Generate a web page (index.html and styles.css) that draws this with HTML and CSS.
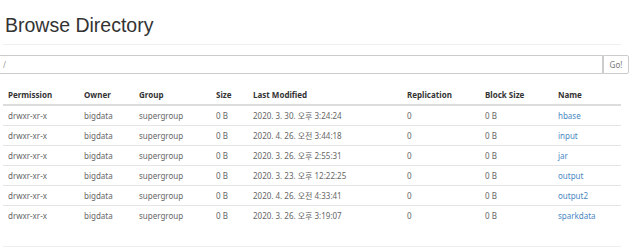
FILE: index.html
```html
<!DOCTYPE html>
<html lang="ko">
<head>
  <meta charset="UTF-8">
  <title>Browsing HDFS</title>
  <link rel="stylesheet" href="styles.css">
</head>
<body>
  <div class="page-header">
    <h1 class="page-title">Browse Directory</h1>
  </div>

  <!-- Path input -->
  <div class="path-bar">
    <input type="text" class="path-input" placeholder="/">
    <button type="button" class="go-button">Go!</button>
  </div>

  <table class="dir-table">
    <thead>
      <tr>
        <th class="col-perm">Permission</th>
        <th class="col-owner">Owner</th>
        <th class="col-group">Group</th>
        <th class="col-size">Size</th>
        <th class="col-date">Last Modified</th>
        <th class="col-repl">Replication</th>
        <th class="col-block">Block Size</th>
        <th class="col-name">Name</th>
      </tr>
    </thead>
    <tbody>
      <tr>
        <td>drwxr-xr-x</td><td>bigdata</td><td>supergroup</td><td>0 B</td>
        <td>2020. 3. 30. 오후 3:24:24</td><td>0</td><td>0 B</td><td><a href="#">hbase</a></td>
      </tr>
      <tr>
        <td>drwxr-xr-x</td><td>bigdata</td><td>supergroup</td><td>0 B</td>
        <td>2020. 4. 26. 오전 3:44:18</td><td>0</td><td>0 B</td><td><a href="#">input</a></td>
      </tr>
      <tr>
        <td>drwxr-xr-x</td><td>bigdata</td><td>supergroup</td><td>0 B</td>
        <td>2020. 3. 26. 오후 2:55:31</td><td>0</td><td>0 B</td><td><a href="#">jar</a></td>
      </tr>
      <tr>
        <td>drwxr-xr-x</td><td>bigdata</td><td>supergroup</td><td>0 B</td>
        <td>2020. 3. 23. 오후 12:22:25</td><td>0</td><td>0 B</td><td><a href="#">output</a></td>
      </tr>
      <tr>
        <td>drwxr-xr-x</td><td>bigdata</td><td>supergroup</td><td>0 B</td>
        <td>2020. 4. 26. 오전 4:33:41</td><td>0</td><td>0 B</td><td><a href="#">output2</a></td>
      </tr>
      <tr>
        <td>drwxr-xr-x</td><td>bigdata</td><td>supergroup</td><td>0 B</td>
        <td>2020. 3. 26. 오후 3:19:07</td><td>0</td><td>0 B</td><td><a href="#">sparkdata</a></td>
      </tr>
    </tbody>
  </table>

  <hr class="footer-rule">
</body>
</html>
```

FILE: styles.css
```css
body {
  margin: 0;
  background-color: #fff;
  font-family: "Noto Sans", "Noto Sans CJK KR", sans-serif;
  color: #555;
}
.page-header {
  width: 618px;
  margin-left: 3px;
  border-bottom: 1px solid #eee;
  padding-bottom: 7px;
}
.page-title {
  margin: 0;
  padding: 13px 0 0 2px;
  font-family: "Liberation Sans", Arial, sans-serif;
  font-size: 19.5px;
  font-weight: normal;
  line-height: 24px;
  color: #333;
}

/* path input + go button */
.path-bar {
  display: flex;
  width: 629px;
  height: 19px;
  margin-top: 10px;
}
.path-input {
  flex: 1;
  box-sizing: border-box;
  height: 19px;
  margin: 0;
  padding: 0 3px;
  border: 1px solid #ccc;
  border-left: none;
  font-family: "Noto Sans", sans-serif;
  font-size: 8px;
  color: #555;
  outline: none;
}
.path-input::placeholder {
  color: #999;
}
.go-button {
  box-sizing: border-box;
  width: 26px;
  height: 19px;
  margin: 0;
  padding: 0;
  border: 1px solid #ccc;
  border-radius: 0 2px 2px 0;
  background-color: #fff;
  font-family: "Noto Sans", sans-serif;
  font-size: 8px;
  color: #777;
}

/* directory listing */
.dir-table {
  width: 618px;
  margin: 11px 0 0 3px;
  border-collapse: collapse;
  font-size: 8px;
}
.dir-table th,
.dir-table td {
  height: 19px;
  padding: 0 0 0 5px;
  text-align: left;
  vertical-align: middle;
  white-space: nowrap;
}
.dir-table th {
  color: #333;
  font-weight: bold;
  border-bottom: 2px solid #ddd;
}
.dir-table td {
  color: #666;
  border-top: 1px solid #e4e4e4;
}
.dir-table a {
  color: #4a88c2;
  text-decoration: none;
}
.col-perm { width: 71px; }
.col-owner { width: 50px; }
.col-group { width: 72px; }
.col-size { width: 32px; }
.col-date { width: 149px; }
.col-repl { width: 73px; }
.col-block { width: 68px; }

.footer-rule {
  width: 618px;
  margin: 21px 0 0 3px;
  border: none;
  border-top: 1px solid #eee;
}
```
